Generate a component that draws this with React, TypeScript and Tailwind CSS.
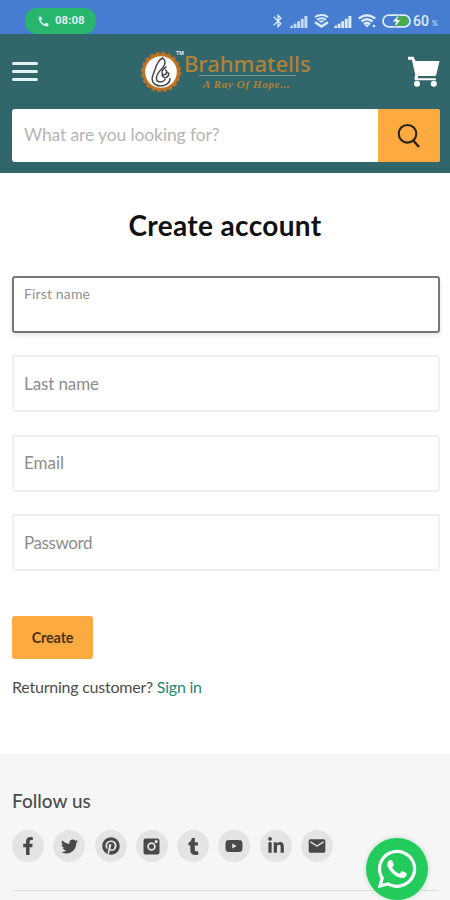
import React, { useState } from 'react';
import {
    FaFacebookF, FaTwitter, FaPinterest, FaTumblr, FaYoutube, FaLinkedinIn, FaWhatsapp,
} from 'react-icons/fa';
import { MdEmail, MdBluetooth, MdCall } from 'react-icons/md';

const SignalIcon = () => (
    <svg width="18" height="13" viewBox="0 0 18 13" fill="currentColor">
        <path d="M0 13L1 10.500H3V13Z" />
        <rect x="3.7" y="8.7" width="2.8" height="4.3" />
        <rect x="7.2" y="6.3" width="2.9" height="6.7" />
        <rect x="10.8" y="3.8" width="2.9" height="9.2" />
        <rect x="14.4" y="1" width="3" height="12" />
    </svg>
);

const VolteIcon = () => (
    <svg width="15" height="14" viewBox="0 0 15 14" fill="none" stroke="currentColor" strokeWidth="2">
        <path d="M1 3Q7.5-1 14 3M3 5.6Q7.5 2.8 12 5.600" />
        <path d="M4 6.500H11L7.500 9Z" fill="currentColor" stroke="none" />
        <path d="M1 8.200L7.500 12.600L14 8.200" strokeWidth="2.400" />
    </svg>
);

const WifiIcon = () => (
    <svg width="18" height="14" viewBox="0 0 18 14" fill="none" stroke="currentColor" strokeWidth="2.4">
        <path d="M.8 4.5Q9-2 17.200 4.500M3.500 7.500Q9 3 14.500 7.500M6 10.200Q9 8 12 10.200" />
        <path d="M9 13.500L6.500 10.800H11.500Z" fill="currentColor" stroke="none" />
        <circle cx="16" cy="12" r="1.3" fill="currentColor" stroke="none" />
    </svg>
);

const BatteryIcon = () => (
    <svg width="29" height="14" viewBox="0 0 29 14">
        <rect x="1" y="1.2" width="27" height="11.6" rx="5.8" fill="none" stroke="#dcecf8" strokeWidth="1.8" />
        <path d="M14 2.2H21.5A4.8 4.8 0 0 1 21.5 11.8H12Z" fill="#48ae42" />
        <path d="M16.5 1L10.5 7.8H14L12.8 13L18.8 6H15.5Z" fill="#fff" stroke="#467dd1" strokeWidth=".5" />
    </svg>
);

const CartIcon = () => (
    <svg width="32" height="32" viewBox="0 0 32 32" fill="#fff">
        <path d="M0 .8H5.600L7.500 5H31.500L28.300 18.500Q28 20 26.500 20H10.200L9.700 22.200H27.800V24.200H7.200L6.300 22.800L7.300 18.800L3.900 3.800H0Z" />
        <circle cx="9" cy="27.700" r="3" />
        <circle cx="25.800" cy="27.700" r="3" />
    </svg>
);

const InstagramIcon = () => (
    <svg width="17" height="17" viewBox="0 0 17 17">
        <rect x=".5" y=".5" width="16" height="16" rx="2.2" fill="#494949" />
        <rect x="11.8" y="2.3" width="2.8" height="2.8" rx=".4" fill="#e4e4e4" />
        <circle cx="8.5" cy="8.5" r="3.4" fill="none" stroke="#e4e4e4" strokeWidth="1.8" />
    </svg>
);

const LogoMark = () => (
    <svg width="42" height="42" viewBox="0 0 42 42">
        <circle cx="21" cy="21" r="19" fill="none" stroke="#b5702a" strokeWidth="2.4" strokeDasharray="3.7 2.27" />
        <circle cx="21" cy="21" r="17.2" fill="#fff" stroke="#bd7424" strokeWidth="2.8" />
        <g fill="none" stroke="#48484c" strokeWidth="1.5" strokeLinecap="round">
            <path d="M22.500 7C16 10 15.500 19 13 24C10.500 30 14 34.500 20 35C26 35 30 32 30 27.500" />
            <path d="M22.500 7C26 9 26 13 22.500 17C18.500 21 15.500 25 16.500 28.500C17.500 31.500 23 32 25 28.500" />
            <path d="M26 16C22 18 21 22 23 23.500C26 25 28 20 25.500 19M22 24C23 27 26 28 28 25C30 22 27 20 26 23" />
        </g>
    </svg>
);

const socials = [
    { name: 'Facebook', icon: <FaFacebookF size={18} /> },
    { name: 'Twitter', icon: <FaTwitter size={17} /> },
    { name: 'Pinterest', icon: <FaPinterest size={18} /> },
    { name: 'Instagram', icon: <InstagramIcon /> },
    { name: 'Tumblr', icon: <FaTumblr size={17} /> },
    { name: 'YouTube', icon: <FaYoutube size={18} /> },
    { name: 'LinkedIn', icon: <FaLinkedinIn size={18} /> },
    { name: 'Email', icon: <MdEmail size={20} /> },
];

const fields = [
    { id: 'firstName', label: 'First name', type: 'text', spacing: 'tracking-[0.15px]' },
    { id: 'lastName', label: 'Last name', type: 'text', spacing: 'tracking-[-0.1px]' },
    { id: 'email', label: 'Email', type: 'email', spacing: 'tracking-[0px]' },
    { id: 'password', label: 'Password', type: 'password', spacing: 'tracking-[-0.4px]' },
];

const StatusBar = () => (
    <div className="flex h-[34px] items-end bg-[#467dd1] pl-[25px] text-[#dcecf8]">
        <div className="flex h-[26px] w-[71px] items-center rounded-[12px] bg-[#27b66b] pl-[12px]">
            <MdCall size={13} />
            <span className="ml-[5px] font-['Roboto',sans-serif] text-[11.5px] font-bold">08:08</span>
        </div>
        <div className="ml-[174px] flex h-[26px] items-center">
            <MdBluetooth size={16} />
            <div className="ml-[4px] opacity-85"><SignalIcon /></div>
            <div className="ml-[6px]"><VolteIcon /></div>
            <div className="ml-[5px]"><SignalIcon /></div>
            <div className="ml-[6px]"><WifiIcon /></div>
            <div className="ml-[6px]"><BatteryIcon /></div>
            <span className="ml-[2px] font-['Roboto',sans-serif] text-[14px] font-medium">60</span>
            <span className="ml-[3px] mt-1 text-[7px]">%</span>
        </div>
    </div>
);

const Header = () => (
    <header className="h-[139px] bg-[#31666a] px-3">
        <div className="flex h-[75px] items-center">
            <button aria-label="Menu" className="flex w-[26px] flex-col gap-[5px]">
                <span className="h-[3px] rounded-sm bg-[#e2f3f3]"></span>
                <span className="h-[3px] rounded-sm bg-[#e2f3f3]"></span>
                <span className="h-[3px] rounded-sm bg-[#e2f3f3]"></span>
            </button>
            <div className="ml-[102px] flex text-[#b18138]">
                <LogoMark />
                <span className="-ml-[6px] font-['Liberation_Sans',sans-serif] text-[5.5px] font-bold leading-none text-[#e4f3f3]">TM</span>
                <div className="flex w-[128px] flex-col">
                    <span className="whitespace-nowrap font-['Noto_Sans',sans-serif] text-[22px] font-medium leading-[24px]">Brahmatells</span>
                    <span className="ml-[15px] h-px w-[97px] bg-[#719995]"></span>
                    <span className="ml-[19px] whitespace-nowrap font-['Liberation_Serif',serif] text-[11px] font-bold italic leading-[17px] tracking-[0.65px]">A Ray Of Hope...</span>
                </div>
            </div>
            <button aria-label="Cart" className="-mr-[2px] ml-auto"><CartIcon /></button>
        </div>
        <form className="flex h-[53px] w-[428px] overflow-hidden rounded-[3px] bg-white" onSubmit={(e) => e.preventDefault()}>
            <input
                type="text"
                placeholder="What are you looking for?"
                className="w-[366px] px-3 text-[17.5px] tracking-[-0.12px] placeholder:text-[#b5b5b5] focus:outline-none"
            />
            <button aria-label="Search" className="flex flex-1 items-center justify-center bg-[#fdaa41]">
                <svg width="24" height="26" viewBox="0 0 24 26" fill="none" stroke="#2b2114" strokeWidth="2.1">
                    <circle cx="10.5" cy="10.8" r="8.8" />
                    <path d="M16.200 17.500L22 24" strokeWidth="2.5" />
                </svg>
            </button>
        </form>
    </header>
);

export default function App() {
    const [values, setValues] = useState<Record<string, string>>({});
    const [active, setActive] = useState('firstName');

    const handleSubmit = (e: React.FormEvent<HTMLFormElement>) => {
        e.preventDefault();
    };

    return (
        <div className="relative h-[900px] w-[450px] overflow-hidden bg-white font-['Lato',sans-serif] text-[#4d4d4d]">
            <StatusBar />
            <Header />
            <main className="h-[581px] px-3 pt-[33px]">
                <h1 className="text-center text-[28px] font-bold leading-[38px] tracking-[0.35px] text-[#111]">Create account</h1>
                <form onSubmit={handleSubmit} className="mt-[32px] w-[428px]">
                    <div className="flex flex-col gap-[22.4px]">
                        {fields.map((field) => {
                            const isActive = active === field.id;
                            return (
                                <label
                                    key={field.id}
                                    className={`flex h-[57px] flex-col rounded-[3px] px-[10px] ${isActive ? 'border-2 border-[#777] text-[#929292] shadow-[0_2px_5px_#e2e2e2]' : 'justify-center border-2 border-[#f0f0f0] text-[#8d8d8d]'}`}
                                >
                                    <span className={`${field.spacing} ${isActive ? 'mt-[6px] text-[14px] leading-[20px]' : 'text-[17px] leading-[22px]'}`}>{field.label}</span>
                                    <input
                                        type={field.type}
                                        value={values[field.id] || ''}
                                        onFocus={() => setActive(field.id)}
                                        onChange={(e) => setValues({ ...values, [field.id]: e.target.value })}
                                        className={isActive ? 'h-[22px] w-full focus:outline-none' : 'sr-only'}
                                    />
                                </label>
                            );
                        })}
                    </div>
                    <button type="submit" className="mt-[45px] block h-[43px] w-[81px] rounded-[3px] bg-[#fdaa41] text-[14.5px] font-bold tracking-[-0.2px] text-[#4a3512]">
                        Create
                    </button>
                </form>
                <p className="mt-[16px] text-[16px] leading-[24px] tracking-[-0.23px]">
                    Returning customer? <a href="#" className="text-[#278574]">Sign in</a>
                </p>
            </main>
            <footer className="h-[146px] bg-[#f6f6f6] px-3 pt-[34px]">
                <h2 className="text-[19px] font-medium leading-[26px]">Follow us</h2>
                <div className="mt-[16px] flex gap-[9.3px]">
                    {socials.map((social) => (
                        <a key={social.name} href="#" aria-label={social.name} className="flex h-[32px] w-[32px] items-center justify-center rounded-full bg-[#e4e4e4] text-[#494949]">
                            {social.icon}
                        </a>
                    ))}
                </div>
                <div className="mt-[28px] h-px bg-[#dedede]"></div>
            </footer>
            <a href="#" aria-label="WhatsApp" className="absolute left-[366px] top-[838px] flex h-[62px] w-[62px] items-center justify-center rounded-full bg-[#22cb5c] text-white shadow-[0_0_5px_#bdd8c5]">
                <FaWhatsapp size={44} />
            </a>
        </div>
    );
}
